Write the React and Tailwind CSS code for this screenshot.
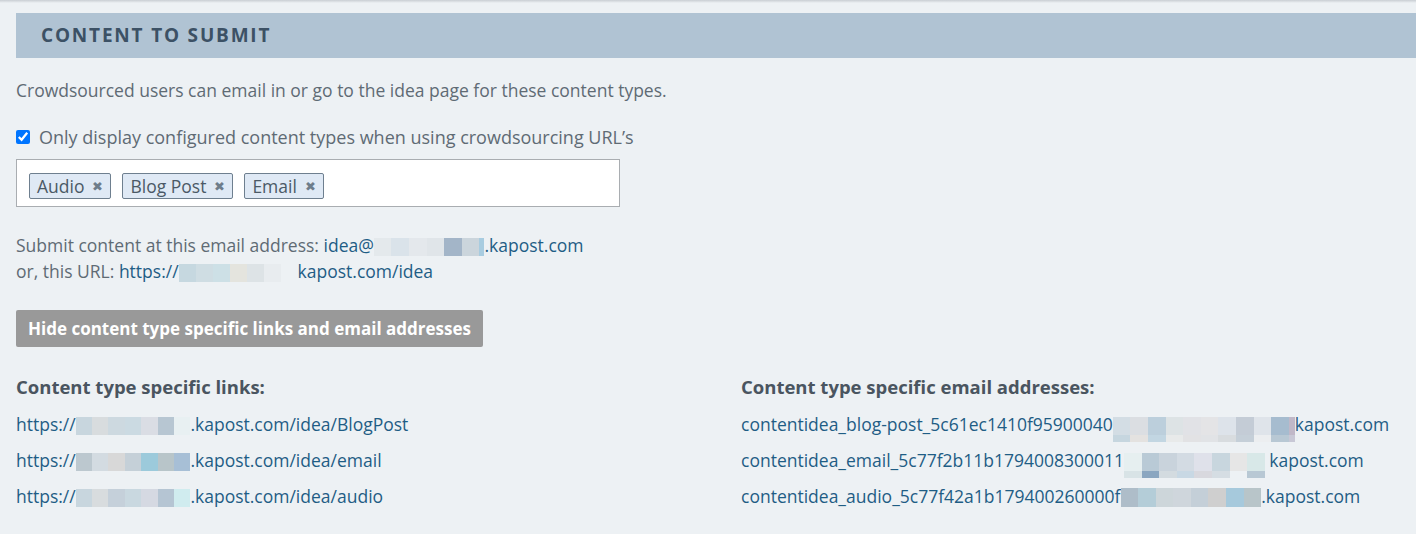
import React from 'react'

// pixelated blocks that mask part of an address; cells may carry a second, shorter row
const Masked = ({ cells, bottom, w = 17, h = 18, bh = 7, last }) => (
  <span className="inline-flex align-[-4px]">
    {cells.map((c, i) => (
      <span key={i} className="inline-flex flex-col" style={{ width: i === cells.length - 1 && last ? last : w }}>
        <span style={{ height: h, background: c }} />
        {bottom && <span style={{ height: bh, background: bottom[i] }} />}
      </span>
    ))}
  </span>
)

const Tag = ({ label }) => (
  <span className="inline-flex h-[26px] items-center gap-[8px] rounded-[2px] border border-[#6e7f8f] bg-[#dfe9f5] pl-[7px] pr-[7px] text-[17.5px] text-[#4b5966]">
    {label}
    <span className="text-[13px] leading-none text-[#6e7d8b]">✖</span>
  </span>
)

const links = [
  { cells: ['#c8d6de', '#d8dcde', '#cdd9e0', '#cbdae2', '#dadde4', '#b7c6d2', '#e8f0f2'], path: 'BlogPost' },
  { cells: ['#bcc8cf', '#d3dbe1', '#d8d8d8', '#c5d0d8', '#9ccadb', '#b8c5c9', '#a7bfd6'], path: 'email' },
  { cells: ['#c8d6de', '#d8dcde', '#c5d0da', '#c9d8e0', '#d5d9e2', '#b5c5d3', '#d0ecef'], path: 'audio' },
]

const emails = [
  {
    text: 'contentidea_blog-post_5c61ec1410f95900040',
    cells: ['#d3dde4', '#dbdee2', '#bccfdc', '#dde3e5', '#e1e2e6', '#e4e4e6', '#dde3ea', '#c4ccd6', '#dfe4ea', '#a6bccf', '#c0b8c8'],
    bottom: ['#c6d6df', '#e4e2e0', '#c2d6e2', '#e8eaea', '#e2e2e4', '#e1e3e6', '#d8dcdf', '#c5cfd8', '#eceef0', '#b8c8d4', '#c8c8d6'],
    last: 6,
    tail: 'kapost.com',
  },
  {
    text: 'contentidea_email_5c77f2b11b1794008300011',
    cells: ['#e6eff0', '#b9cad6', '#c9d3dc', '#d3dbe3', '#dfe1ea', '#c8d6de', '#e6e6e6', '#d8e8e8'],
    bottom: ['#d8e3e6', '#8aa6c0', '#d3dbe0', '#c8d8e4', '#d8d8de', '#d5dde3', '#edf1f4', '#b8c8d4'],
    tail: '\u00a0kapost.com',
  },
  {
    text: 'contentidea_audio_5c77f42a1b179400260000f',
    cells: ['#aebdc9', '#b4cdd8', '#cdd6da', '#cfd6dc', '#c4cfd8', '#cfcfcf', '#a6c9dc', '#b8c5c9'],
    tail: '.kapost.com',
  },
]

export default function App() {
  return (
    <div className="min-h-screen bg-[#edf1f4] font-['Open_Sans','Noto_Sans',sans-serif] text-[17.5px] text-[#5f6b74]">
      <div className="h-[3px] bg-gradient-to-b from-[#c9ced3] to-[#edf1f4]" />
      <div className="pl-4 pt-[10px]">
        <div className="flex h-[45px] items-center bg-[#b0c3d3] pl-[25px]">
          <h2 className="text-[19px] font-bold tracking-[0.095em] text-[#3c5165]">CONTENT TO SUBMIT</h2>
        </div>

        <p className="mt-[20px] leading-[24px]">
          Crowdsourced users can email in or go to the idea page for these content types.
        </p>

        <label className="mt-[23px] flex items-center gap-[9px] text-[18px] leading-[24px]">
          <input type="checkbox" defaultChecked className="h-[14px] w-[14px] accent-[#0075ff]" />
          Only display configured content types when using crowdsourcing URL’s
        </label>

        <div className="mt-[10px] flex h-[48px] w-[604px] items-start gap-[11px] border border-[#a9adb1] bg-white pl-[12px] pt-[13px]">
          <Tag label="Audio" />
          <Tag label="Blog Post" />
          <Tag label="Email" />
        </div>

        <div className="mt-[25px] leading-[26px]">
          <div>
            Submit content at this email address:{' '}
            <a className="text-[#1f5d85]">
              idea@
              <Masked w={17.6} last={5} cells={['#e4e9ec', '#dae3ea', '#e4e8ec', '#e0e5e9', '#a3b5c8', '#cbd5dc', '#a8cce0']} />
              .kapost.com
            </a>
          </div>
          <div>
            or, this URL:{' '}
            <a className="text-[#1f5d85]">
              https://
              <Masked w={17} cells={['#c6d8e0', '#cfdde3', '#cde0e6', '#e4e4de', '#dde3e6', '#e8ecef', '#edf1f4']} />
              kapost.com/idea
            </a>
          </div>
        </div>

        <button className="mt-[26px] flex h-[37px] items-center rounded-[2px] bg-[#999999] px-[12px] text-[17px] font-bold text-white">
          Hide content type specific links and email addresses
        </button>

        <div className="mt-[28px] grid grid-cols-[725px_1fr]">
          <div>
            <h3 className="text-[18.5px] font-bold leading-[24px] text-[#4a5560]">Content type specific links:</h3>
            <ul className="mt-[13px] flex flex-col gap-[12px] leading-[24px] text-[#1f5d85]">
              {links.map((l) => (
                <li key={l.path} className="h-[24px]">
                  https://
                  <Masked w={16.4} cells={l.cells} />
                  .kapost.com/idea/{l.path}
                </li>
              ))}
            </ul>
          </div>
          <div>
            <h3 className="text-[18.5px] font-bold leading-[24px] text-[#4a5560]">Content type specific email addresses:</h3>
            <ul className="mt-[13px] flex flex-col gap-[12px] leading-[24px] text-[#1f5d85]">
              {emails.map((e) => (
                <li key={e.text} className="h-[24px] whitespace-nowrap">
                  {e.text}
                  <Masked w={17.6} h={e.bottom ? 18 : 19} bh={7} last={e.last} cells={e.cells} bottom={e.bottom} />
                  {e.tail}
                </li>
              ))}
            </ul>
          </div>
        </div>
      </div>
    </div>
  )
}
